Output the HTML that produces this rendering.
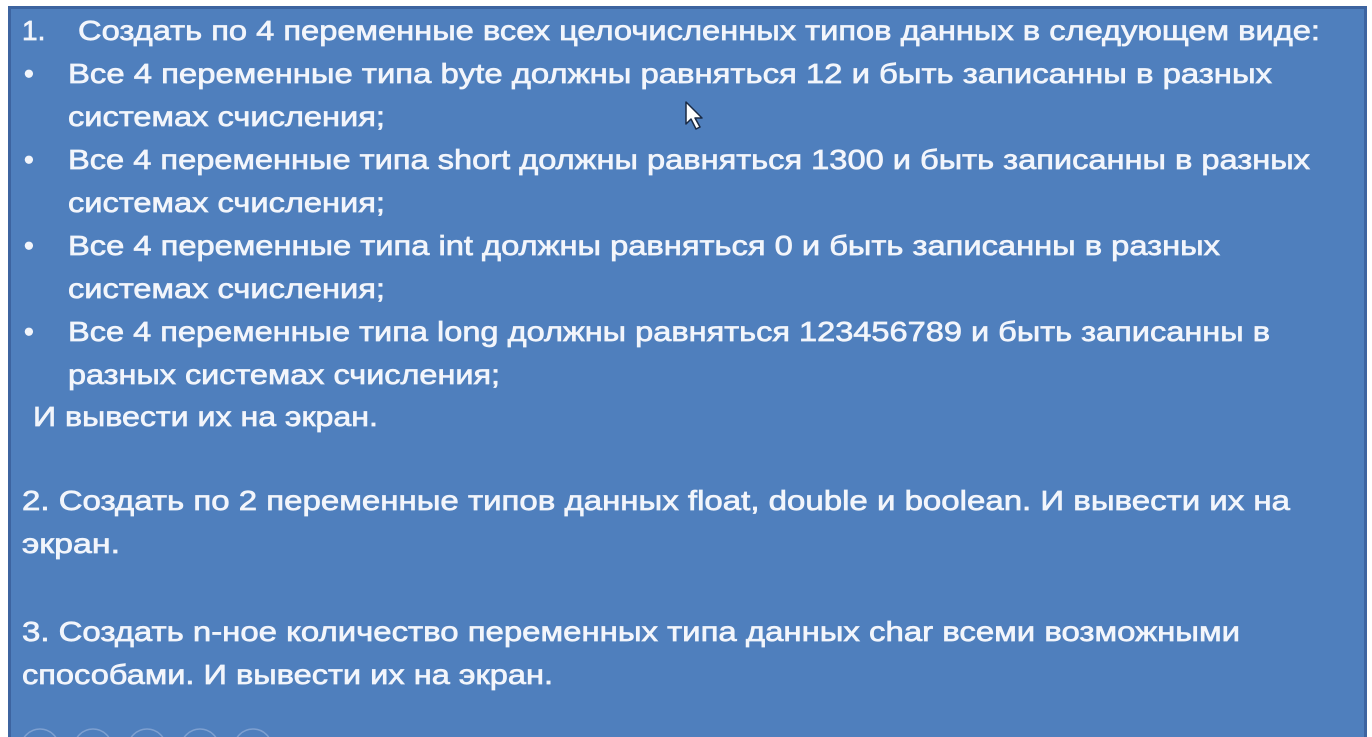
<!DOCTYPE html>
<html><head><meta charset="utf-8"><style>
html,body{margin:0;padding:0;background:#fff;width:1372px;height:737px;overflow:hidden}
svg{display:block}
text{font-family:"Liberation Sans","DejaVu Sans",sans-serif;font-size:28px;fill:#f2f5fb;stroke:#f2f5fb;stroke-width:0.7}
</style></head><body>
<svg width="1372" height="737" viewBox="0 0 1372 737">
<rect x="9.5" y="7.5" width="1356" height="740" fill="#4f7fbd" stroke="#3d64a0" stroke-width="3"/>
<rect x="0" y="0" width="8" height="737" fill="#fff"/>
<g fill="none" stroke="#7ea0d0" stroke-width="1.5">
<circle cx="40" cy="748" r="19"/><circle cx="93" cy="748" r="19"/><circle cx="147" cy="748" r="19"/><circle cx="200" cy="748" r="19"/><circle cx="253" cy="748" r="19"/>
</g>
<text x="22" y="40">1.</text>
<text x="78" y="40" textLength="1242" lengthAdjust="spacingAndGlyphs">Создать по 4 переменные всех целочисленных типов данных в следующем виде:</text>
<text x="24" y="83">•</text><text x="68" y="83" textLength="1204" lengthAdjust="spacingAndGlyphs">Все 4 переменные типа byte  должны равняться 12 и быть записанны в разных</text>
<text x="68" y="126" textLength="317" lengthAdjust="spacingAndGlyphs">системах счисления;</text>
<text x="24" y="169">•</text><text x="68" y="169" textLength="1242" lengthAdjust="spacingAndGlyphs">Все 4 переменные типа short должны равняться 1300 и быть записанны в разных</text>
<text x="68" y="212" textLength="317" lengthAdjust="spacingAndGlyphs">системах счисления;</text>
<text x="24" y="255">•</text><text x="68" y="255" textLength="1152" lengthAdjust="spacingAndGlyphs">Все 4 переменные типа int должны равняться 0 и быть записанны в разных</text>
<text x="68" y="298" textLength="317" lengthAdjust="spacingAndGlyphs">системах счисления;</text>
<text x="24" y="341">•</text><text x="68" y="341" textLength="1202" lengthAdjust="spacingAndGlyphs">Все 4 переменные типа long должны равняться 123456789 и быть записанны в</text>
<text x="68" y="384" textLength="432" lengthAdjust="spacingAndGlyphs">разных системах счисления;</text>
<text x="33" y="426" textLength="345" lengthAdjust="spacingAndGlyphs">И вывести их на экран.</text>
<text x="22" y="510" textLength="1268" lengthAdjust="spacingAndGlyphs">2. Создать по 2 переменные типов данных float, double и  boolean. И вывести их на</text>
<text x="22" y="553" textLength="98" lengthAdjust="spacingAndGlyphs">экран.</text>
<text x="22" y="641" textLength="1218" lengthAdjust="spacingAndGlyphs">3. Создать n-ное количество переменных типа данных char всеми возможными</text>
<text x="22" y="684" textLength="531" lengthAdjust="spacingAndGlyphs">способами. И вывести их на экран.</text>
<path d="M686 102 L686 124 L691 119 L696 129 L700 127 L695 118 L702 118 Z" fill="#fff" stroke="#1a2a44" stroke-width="1.5" stroke-linejoin="round"/>
</svg>
</body></html>
